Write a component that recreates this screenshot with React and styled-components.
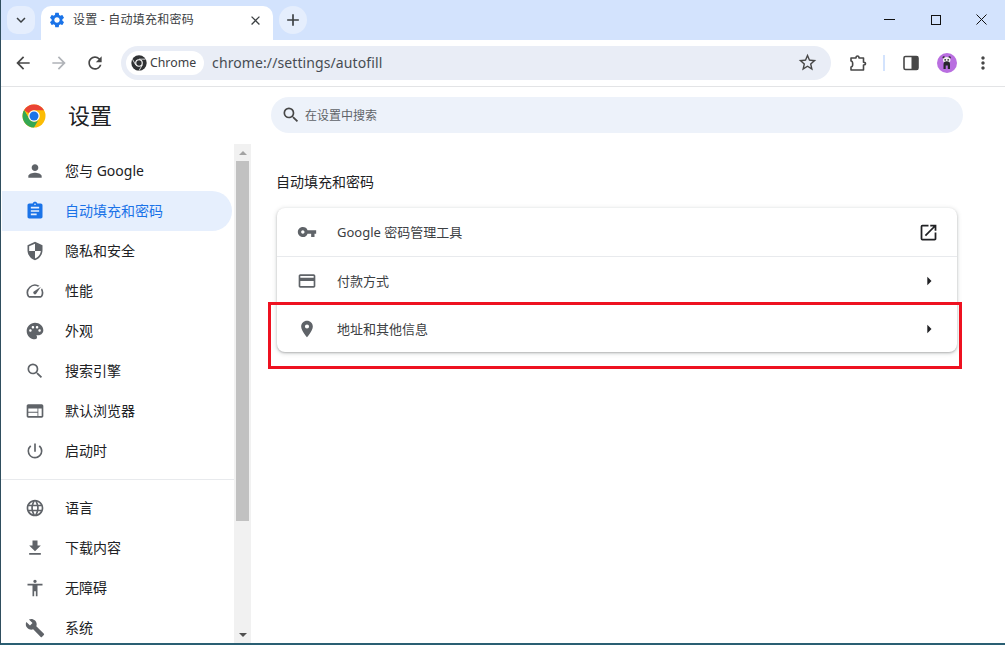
import React from 'react';
import styled, { createGlobalStyle } from 'styled-components';
import {
  MdPerson, MdAssignment, MdSecurity, MdSpeed, MdPalette, MdSearch, MdWeb, MdPowerSettingsNew,
  MdLanguage, MdFileDownload, MdAccessibility, MdBuild, MdVpnKey, MdCreditCard, MdPlace,
  MdOpenInNew, MdArrowRight, MdSettings, MdKeyboardArrowDown, MdClose, MdAdd, MdArrowBack,
  MdArrowForward, MdRefresh, MdStarBorder, MdMoreVert,
} from 'react-icons/md';

const FONT = '"Noto Sans", "Noto Sans CJK SC", sans-serif';

const GlobalStyle = createGlobalStyle`
  html, body { margin: 0; padding: 0; background: #fff; overflow: hidden; }
  body { font-family: ${FONT}; color: #202124; }
`;

const Window = styled.div`
  position: relative;
  width: 1005px;
  height: 645px;
  box-sizing: border-box;
  border-left: 1px solid #2f4e5e;
  border-bottom: 2px solid #2a5f73;
  display: flex;
  flex-direction: column;
  overflow: hidden;
  background: #fff;
`;

const TabStrip = styled.div`
  height: 40px;
  flex: none;
  background: #d3e3fd;
  display: flex;
  align-items: flex-start;
`;

const RoundButton = styled.div`
  width: 28px;
  height: 28px;
  border-radius: ${p => p.$radius || '50%'};
  background: #e5eefd;
  display: flex;
  align-items: center;
  justify-content: center;
  color: #3c4043;
  font-size: ${p => p.$size || 18}px;
  margin: 6px 0 0 ${p => p.$left || 0}px;
`;

const Tab = styled.div`
  width: 232px;
  height: 34px;
  margin: 6px 0 0 6px;
  box-sizing: border-box;
  padding: 0 10px 6px 7px;
  background: #fff;
  border-radius: 10px 10px 0 0;
  display: flex;
  align-items: center;
  gap: 7px;
`;

const TabIcon = styled(MdSettings)`
  color: #1a73e8;
  font-size: 18px;
  flex: none;
`;

const TabTitle = styled.span`
  flex: 1;
  font-size: 12px;
  line-height: 16px;
  color: #3c4043;
  letter-spacing: 0.02em;
  white-space: nowrap;
`;

const WindowControls = styled.div`
  margin-left: auto;
  display: flex;
  align-items: center;
  height: 38px;
  padding-right: 1px;
`;

const ControlSlot = styled.div`
  width: 46px;
  height: 38px;
  display: flex;
  align-items: center;
  justify-content: center;
`;

const Toolbar = styled.div`
  height: 47px;
  flex: none;
  box-sizing: border-box;
  border-bottom: 1px solid #e3e4e6;
  border-radius: 8px 8px 0 0;
  background: #fff;
  display: flex;
  align-items: center;
  padding: 0 0 1px 4px;
`;

const NavIcon = styled.div`
  width: 36px;
  display: flex;
  justify-content: center;
  font-size: 20px;
  color: ${p => (p.$muted ? '#b0b3b8' : '#474747')};
`;

const Omnibox = styled.div`
  width: 710px;
  height: 34px;
  margin-left: 8px;
  border-radius: 17px;
  background: #e9edf6;
  display: flex;
  align-items: center;
  padding: 0 13px 0 5px;
  box-sizing: border-box;
`;

const Chip = styled.div`
  height: 24px;
  padding: 0 8px 0 5px;
  border-radius: 12px;
  background: #fff;
  display: flex;
  align-items: center;
  gap: 3px;
  font-size: 12.3px;
  color: #3c4043;
`;

const Url = styled.span`
  margin-left: 8px;
  font-size: 14px;
  letter-spacing: 0.1px;
  color: #474c52;
  flex: 1;
`;

const StarIcon = styled(MdStarBorder)`
  font-size: 21px;
  color: #474747;
`;

const ToolSlot = styled.div`
  display: flex;
  align-items: center;
  justify-content: center;
  margin-left: ${p => p.$left}px;
  color: #474747;
`;

const ToolDivider = styled.div`
  width: 2px;
  height: 16px;
  margin-left: 15px;
  background: #d3e3fd;
`;

const Content = styled.div`
  flex: 1;
  min-height: 0;
  display: flex;
`;

const Sidebar = styled.aside`
  width: 250px;
  flex: none;
  display: flex;
  flex-direction: column;
`;

const Brand = styled.div`
  height: 57px;
  flex: none;
  display: flex;
  align-items: center;
  padding-left: 21px;
  gap: 22px;
  box-sizing: border-box;
`;

const BrandTitle = styled.h1`
  margin: 0 0 1px;
  font-size: 22px;
  line-height: 30px;
  font-weight: 400;
  color: #202124;
`;

const SideBody = styled.div`
  flex: 1;
  min-height: 0;
  display: flex;
`;

const Nav = styled.nav`
  width: 233px;
  flex: none;
  overflow: hidden;
  padding-top: 7px;
  box-sizing: border-box;
`;

const NavItem = styled.div`
  width: 230px;
  margin-left: 1px;
  height: 40px;
  flex: none;
  display: flex;
  align-items: center;
  box-sizing: border-box;
  padding-left: 23px;
  gap: 20px;
  font-size: 14px;
  border-radius: 0 20px 20px 0;
  background: ${p => (p.$active ? '#e6effd' : 'transparent')};
  color: ${p => (p.$active ? '#1a73e8' : '#202124')};
  & > svg {
    flex: none;
    font-size: 20px;
    color: ${p => (p.$active ? '#1a73e8' : '#5f6368')};
  }
`;

const NavLabel = styled.span`
  line-height: 20px;
  margin-bottom: 1px;
`;

const NavDivider = styled.div`
  height: 1px;
  margin: 8px 0 8px 0;
  background: #e8eaed;
`;

const Scrollbar = styled.div`
  width: 17px;
  flex: none;
  background: #f1f1f1;
  display: flex;
  flex-direction: column;
  align-items: center;
`;

const ScrollArrow = styled.div`
  height: 17px;
  flex: none;
  display: flex;
  align-items: center;
  justify-content: center;
  &::before {
    content: '';
    border-left: 4px solid transparent;
    border-right: 4px solid transparent;
    ${p => (p.$down ? 'border-top: 4px solid #505050;' : 'border-bottom: 4px solid #a3a3a3;')}
  }
`;

const ScrollThumb = styled.div`
  width: 13px;
  height: 360px;
  flex: none;
  background: #c1c1c1;
`;

const ScrollSpace = styled.div`
  flex: 1;
`;

const Main = styled.main`
  flex: 1;
  min-width: 0;
  padding: 10px 0 0 20px;
  box-sizing: border-box;
`;

const SearchBar = styled.div`
  width: 692px;
  height: 36px;
  border-radius: 18px;
  background: #edf2fa;
  display: flex;
  align-items: center;
  padding-left: 10px;
  gap: 4px;
  box-sizing: border-box;
  font-size: 12px;
  color: #5f6368;
  & > svg {
    font-size: 20px;
    color: #474747;
  }
`;

const SectionTitle = styled.h2`
  margin: 39px 0 16px 5px;
  height: 20px;
  line-height: 20px;
  font-size: 14px;
  font-weight: 400;
  color: #202124;
`;

const Card = styled.section`
  width: 680px;
  margin-left: 6px;
  border-radius: 8px;
  background: #fff;
  box-shadow: 0 1px 2px rgba(60, 64, 67, 0.3), 0 1px 4px 1px rgba(60, 64, 67, 0.15);
`;

const Row = styled.div`
  height: ${p => p.$height}px;
  box-sizing: border-box;
  display: flex;
  align-items: center;
  padding: 0 18px 0 20px;
  font-size: 13px;
  color: #3c4043;
  border-top: ${p => (p.$divided ? '1px solid #e8eaed' : 'none')};
`;

const RowLabel = styled.span`
  flex: 1;
  margin-left: 20px;
  line-height: 18px;
  margin-bottom: ${p => (p.$flush ? 0 : 1)}px;
`;

const RowIcon = styled.span`
  width: 20px;
  display: flex;
  justify-content: center;
  font-size: 20px;
  color: #5f6368;
`;

const RowAction = styled.span`
  display: flex;
  font-size: ${p => p.$size}px;
  color: #202124;
`;

const Highlight = styled.div`
  position: absolute;
  left: 267px;
  top: 302px;
  width: 694px;
  height: 67px;
  box-sizing: border-box;
  border: 3px solid #ee1120;
  pointer-events: none;
`;

const ChromeLogo = ({ size }) => (
  <svg width={size} height={size} viewBox="0 0 48 48">
    <circle cx="24" cy="24" r="23" fill="#fbbc04" />
    <path d="M24 1a23 23 0 0 1 19.9 11.5H24a11.5 11.5 0 0 0-10 5.8L4.1 12.5A23 23 0 0 1 24 1z" fill="#ea4335" />
    <path d="M4.1 12.5 14 29.7a11.5 11.5 0 0 0 10 5.8l-9.9 5A23 23 0 0 1 4.1 12.5z" fill="#34a853" />
    <path d="M14 29.7 4.1 12.5A23 23 0 0 0 24 47l10-17.2a11.5 11.5 0 0 1-20 0z" fill="#34a853" />
    <circle cx="24" cy="24" r="11.5" fill="#fff" />
    <circle cx="24" cy="24" r="9" fill="#1a73e8" />
  </svg>
);

const ChromeMono = () => (
  <svg width="16" height="16" viewBox="0 0 48 48">
    <circle cx="24" cy="24" r="23" fill="#2f3133" />
    <circle cx="24" cy="24" r="11.5" fill="#fff" />
    <circle cx="24" cy="24" r="8" fill="#2f3133" />
    <path d="M24 12.5h19.5M14 29.7 4.5 13M34 29.7 24 47" stroke="#fff" strokeWidth="2.4" fill="none" />
  </svg>
);

const ExtensionIcon = () => (
  <svg width="20" height="20" viewBox="0 0 20 20" fill="none" stroke="#474747" strokeWidth="1.6" strokeLinejoin="round">
    <path d="M3 5h5c0-1.400.7-2 1.500-2s1.500.6 1.500 2h4.500v4.200c1.300 0 2 .6 2 1.400s-.7 1.400-2 1.400V17H3v-3c1.100 0 1.700-1.300 1.700-3S4.100 8 3 8z" />
  </svg>
);

const SidePanelIcon = () => (
  <svg width="16" height="16" viewBox="0 0 16 16">
    <rect x="1" y="1.500" width="14" height="13" rx="1.500" fill="none" stroke="#474747" strokeWidth="1.600" />
    <rect x="8.500" y="1.500" width="6.500" height="13" fill="#474747" />
  </svg>
);

const Avatar = () => (
  <svg width="20" height="20" viewBox="0 0 20 20">
    <circle cx="10" cy="10" r="10" fill="#b96ee0" />
    <circle cx="6.800" cy="4.500" r="1.200" fill="#26262a" />
    <circle cx="12.500" cy="4.500" r="1.200" fill="#26262a" />
    <ellipse cx="9.700" cy="7" rx="3.800" ry="3" fill="#f1eff0" />
    <circle cx="8.200" cy="6.800" r="0.900" fill="#333" />
    <circle cx="11.200" cy="6.800" r="0.900" fill="#333" />
    <path d="M6.500 16v-4.500a3.200 3.200 0 0 1 6.500 0V16h-2.200v-3.500H8.700V16z" fill="#26262a" />
  </svg>
);

const navTop = [
  { icon: <MdPerson />, label: '您与 Google' },
  { icon: <MdAssignment />, label: '自动填充和密码', active: true },
  { icon: <MdSecurity />, label: '隐私和安全' },
  { icon: <MdSpeed />, label: '性能' },
  { icon: <MdPalette />, label: '外观' },
  { icon: <MdSearch />, label: '搜索引擎' },
  { icon: <MdWeb />, label: '默认浏览器' },
  { icon: <MdPowerSettingsNew />, label: '启动时' },
];

const navBottom = [
  { icon: <MdLanguage />, label: '语言' },
  { icon: <MdFileDownload />, label: '下载内容' },
  { icon: <MdAccessibility />, label: '无障碍' },
  { icon: <MdBuild />, label: '系统' },
];

const renderNav = items =>
  items.map(item => (
    <NavItem key={item.label} $active={item.active}>
      {item.icon}
      <NavLabel>{item.label}</NavLabel>
    </NavItem>
  ));

export default function App() {
  return (
    <Window>
      <GlobalStyle />
      <TabStrip>
        <RoundButton $radius="10px" $left={6} $size={18}><MdKeyboardArrowDown /></RoundButton>
        <Tab>
          <TabIcon />
          <TabTitle>设置 - 自动填充和密码</TabTitle>
          <MdClose size={15} color="#3c4043" />
        </Tab>
        <RoundButton $left={6} $size={20}><MdAdd /></RoundButton>
        <WindowControls>
          <ControlSlot>
            <svg width="11" height="11" viewBox="0 0 11 11"><path d="M0 5.500h11" stroke="#111" /></svg>
          </ControlSlot>
          <ControlSlot>
            <svg width="11" height="11" viewBox="0 0 11 11"><rect x="1.500" y="1.500" width="9" height="9" fill="none" stroke="#111" /></svg>
          </ControlSlot>
          <ControlSlot>
            <svg width="11" height="11" viewBox="0 0 11 11"><path d="M.5.500l10 10M10.500.500l-10 10" stroke="#111" /></svg>
          </ControlSlot>
        </WindowControls>
      </TabStrip>

      <Toolbar>
        <NavIcon><MdArrowBack /></NavIcon>
        <NavIcon $muted><MdArrowForward /></NavIcon>
        <NavIcon><MdRefresh /></NavIcon>
        <Omnibox>
          <Chip><ChromeMono /><span>Chrome</span></Chip>
          <Url>chrome://settings/autofill</Url>
          <StarIcon />
        </Omnibox>
        <ToolSlot $left={17}><ExtensionIcon /></ToolSlot>
        <ToolDivider />
        <ToolSlot $left={18}><SidePanelIcon /></ToolSlot>
        <ToolSlot $left={18}><Avatar /></ToolSlot>
        <ToolSlot $left={16}><MdMoreVert size={20} /></ToolSlot>
      </Toolbar>

      <Content>
        <Sidebar>
          <Brand>
            <ChromeLogo size={24} />
            <BrandTitle>设置</BrandTitle>
          </Brand>
          <SideBody>
            <Nav>
              {renderNav(navTop)}
              <NavDivider />
              {renderNav(navBottom)}
            </Nav>
            <Scrollbar>
              <ScrollArrow />
              <ScrollThumb />
              <ScrollSpace />
              <ScrollArrow $down />
            </Scrollbar>
          </SideBody>
        </Sidebar>

        <Main>
          <SearchBar>
            <MdSearch />
            <span>在设置中搜索</span>
          </SearchBar>
          <SectionTitle>自动填充和密码</SectionTitle>
          <Card>
            <Row $height={48}>
              <RowIcon><MdVpnKey /></RowIcon>
              <RowLabel>Google 密码管理工具</RowLabel>
              <RowAction $size={21}><MdOpenInNew /></RowAction>
            </Row>
            <Row $height={49} $divided>
              <RowIcon><MdCreditCard /></RowIcon>
              <RowLabel>付款方式</RowLabel>
              <RowAction $size={20}><MdArrowRight /></RowAction>
            </Row>
            <Row $height={47}>
              <RowIcon><MdPlace /></RowIcon>
              <RowLabel $flush>地址和其他信息</RowLabel>
              <RowAction $size={20}><MdArrowRight /></RowAction>
            </Row>
          </Card>
        </Main>
      </Content>
      <Highlight />
    </Window>
  );
}
